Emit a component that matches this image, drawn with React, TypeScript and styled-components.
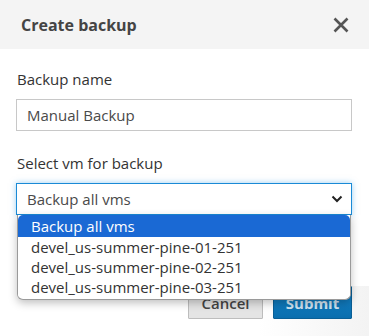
import React from 'react';
import styled, { createGlobalStyle } from 'styled-components';

const GlobalStyle = createGlobalStyle`
  html, body {
    margin: 0;
    padding: 0;
    background: #fff;
    font-family: "Open Sans", "Liberation Sans", sans-serif;
    color: #333;
  }
`;

const Modal = styled.div`
  width: 369px;
  height: 336px;
  background: #fff;
  display: flex;
  flex-direction: column;
  overflow: hidden;
`;

const Header = styled.div`
  height: 49px;
  background: #f4f4f4;
  display: flex;
  align-items: center;
  justify-content: space-between;
  padding: 0 19px 0 21px;
  box-sizing: border-box;
`;

const Title = styled.h3`
  margin: 0;
  font-size: 16px;
  font-weight: 700;
  color: #444;
`;

const CloseButton = styled.button`
  border: 0;
  background: none;
  padding: 0;
  width: 18px;
  height: 18px;
  display: flex;
  align-items: center;
  justify-content: center;
  cursor: pointer;
`;

const Body = styled.div`
  padding: 20px 17px 0 16px;
  display: flex;
  flex-direction: column;
`;

const Label = styled.label`
  font-size: 15px;
  font-weight: 500;
  color: #333;
  line-height: 20px;
  padding-left: 1px;
  margin-bottom: 10px;
`;

const Field = styled.div<{ $focused?: boolean }>`
  height: 32px;
  box-sizing: border-box;
  border: 1px solid ${(p) => (p.$focused ? '#1a8ad6' : '#c8c8c8')};
  box-shadow: ${(p) => (p.$focused ? '0 0 6px rgba(60, 160, 230, 0.5)' : 'none')};
  display: flex;
  align-items: center;
  justify-content: space-between;
  padding: 0 8px 0 10px;
  font-size: 15px;
  color: #4a4a4a;
  background: #fff;
`;

const Group = styled.div`
  display: flex;
  flex-direction: column;
  margin-bottom: 22px;
  position: relative;
`;

const Options = styled.ul`
  position: absolute;
  z-index: 2;
  top: 62px;
  left: 1px;
  right: 1px;
  margin: 0;
  padding: 0 0 2px;
  list-style: none;
  background: #fff;
  border: 1px solid #9a9a9a;
  border-top: 0;
  border-radius: 0 0 6px 6px;
  box-shadow: 0 3px 8px rgba(0, 0, 0, 0.25);
  overflow: hidden;
`;

const Option = styled.li<{ $active?: boolean }>`
  height: 20px;
  line-height: 20px;
  padding-left: 13px;
  font-size: 15px;
  color: ${(p) => (p.$active ? '#fff' : '#333')};
  background: ${(p) => (p.$active ? '#1a69d4' : '#fff')};
  border-radius: ${(p) => (p.$active ? '5px 5px 0 0' : '0')};
  &:first-child {
    height: 22px;
    line-height: 22px;
  }
`;

const Footer = styled.div`
  flex: 1;
  display: flex;
  justify-content: flex-end;
  align-items: flex-start;
  gap: 10px;
  padding: 0 17px 0 0;
  margin-top: 49px;
  background: linear-gradient(90deg, #fff 70%, #f3f3f3);
`;

const Button = styled.button<{ $primary?: boolean }>`
  width: ${(p) => (p.$primary ? '79px' : '75px')};
  height: 33px;
  box-sizing: border-box;
  font-family: inherit;
  font-size: 15px;
  font-weight: ${(p) => (p.$primary ? 700 : 600)};
  padding: 0;
  color: ${(p) => (p.$primary ? '#cfe2f0' : '#444')};
  background: ${(p) => (p.$primary ? 'linear-gradient(#1683c8, #0a6eae)' : '#e4e4e4')};
  border: 1px solid ${(p) => (p.$primary ? '#0a5f96' : '#bdbdbd')};
  border-radius: 1px;
`;

const Chevron = () => (
  <svg width="12" height="8" viewBox="0 0 12 8">
    <path d="M1.5 1.5 L6 6 L10.5 1.5" fill="none" stroke="#222" strokeWidth="2" />
  </svg>
);

const CloseIcon = () => (
  <svg width="16" height="16" viewBox="0 0 16 16">
    <path d="M1.5 1.5 L14.5 14.5 M14.5 1.5 L1.5 14.5" stroke="#555" strokeWidth="2.6" />
  </svg>
);

const vms = ['devel_us-summer-pine-01-251', 'devel_us-summer-pine-02-251', 'devel_us-summer-pine-03-251'];

export default function App() {
  return (
    <Modal>
      <GlobalStyle />
      <Header>
        <Title>Create backup</Title>
        <CloseButton aria-label="Close">
          <CloseIcon />
        </CloseButton>
      </Header>
      <Body>
        <Group>
          <Label>Backup name</Label>
          <Field>Manual Backup</Field>
        </Group>
        <Group>
          <Label>Select vm for backup</Label>
          <Field $focused>
            Backup all vms
            <Chevron />
          </Field>
          <Options>
            <Option $active>Backup all vms</Option>
            {vms.map((vm) => (
              <Option key={vm}>{vm}</Option>
            ))}
          </Options>
        </Group>
      </Body>
      <Footer>
        <Button>Cancel</Button>
        <Button $primary>Submit</Button>
      </Footer>
    </Modal>
  );
}
